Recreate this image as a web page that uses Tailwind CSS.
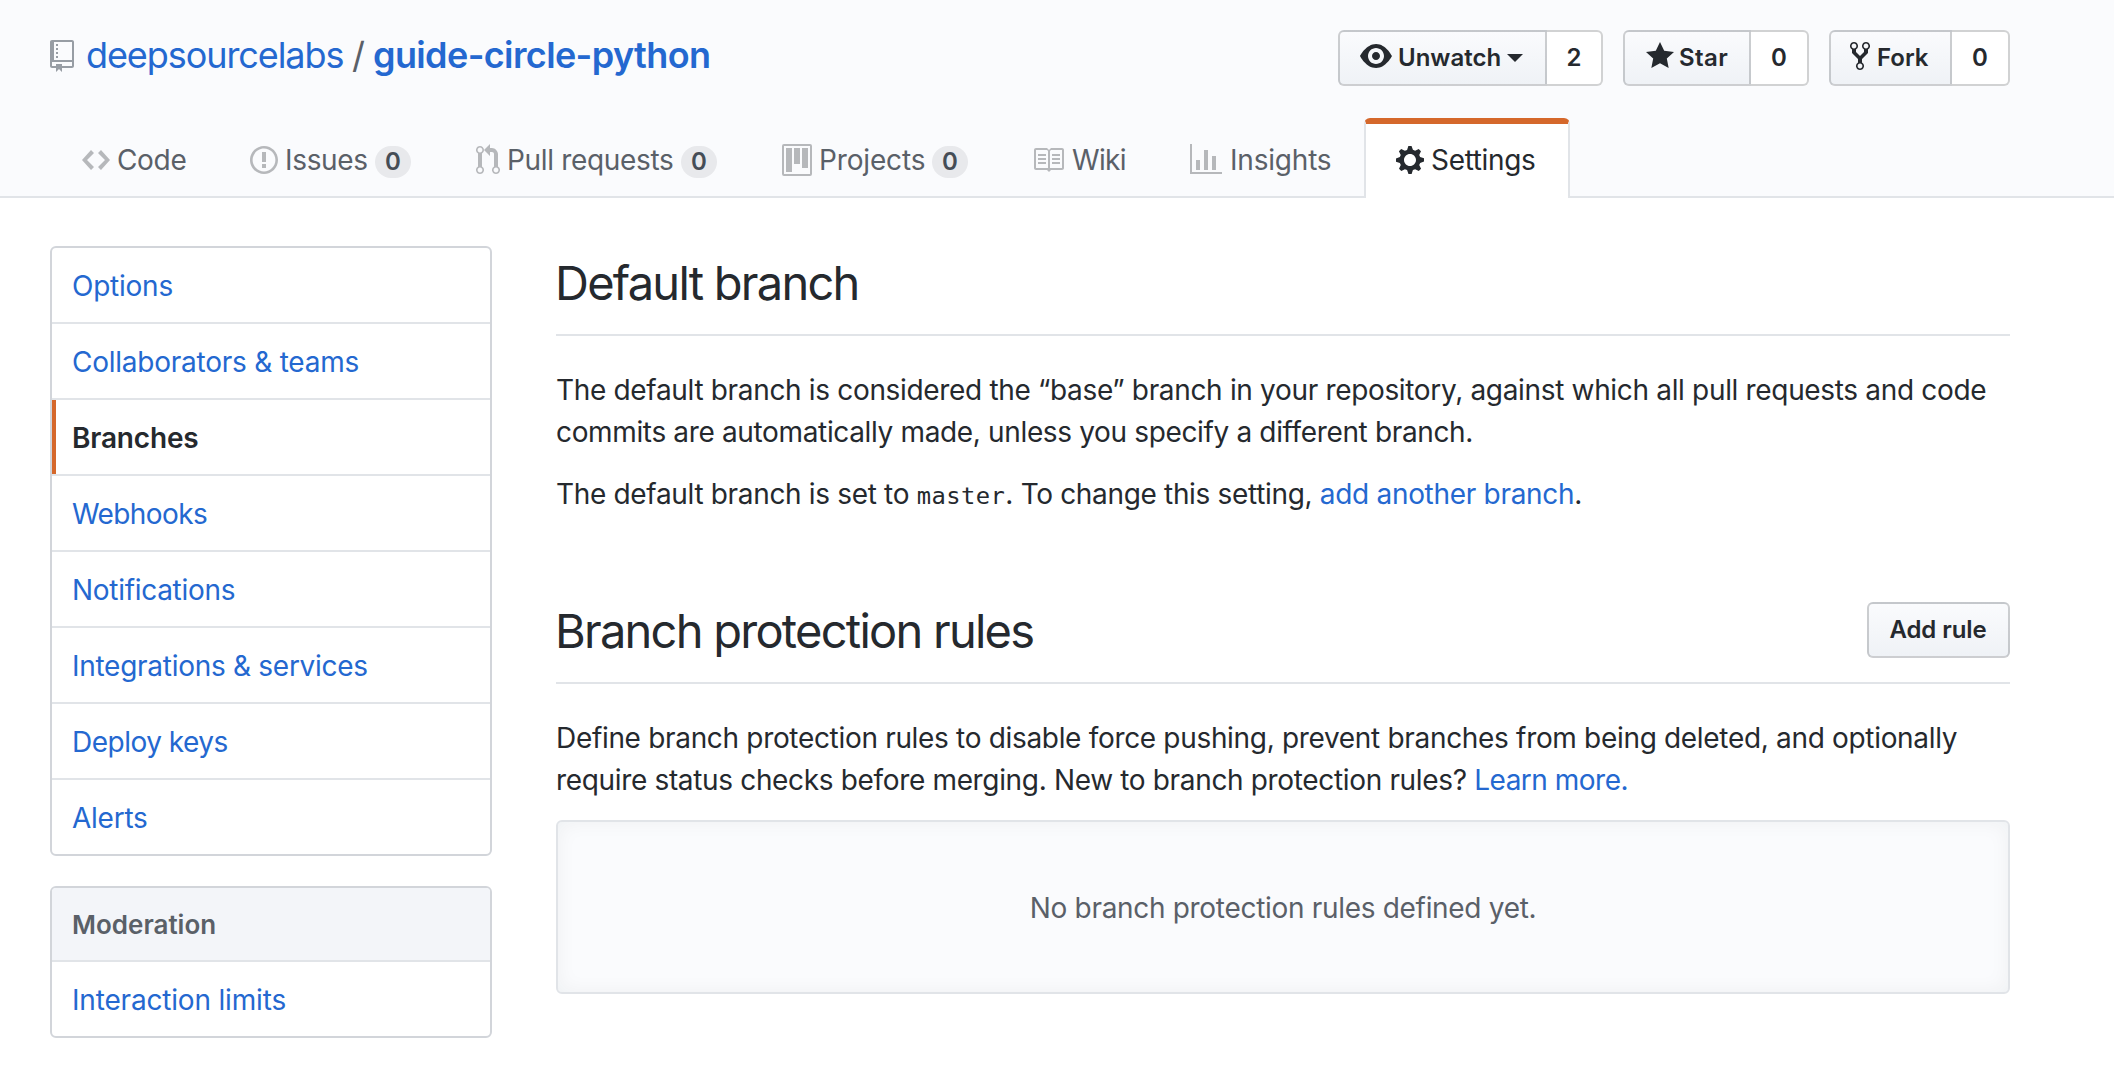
<!DOCTYPE html>
<html lang="en">
<head>
<meta charset="utf-8">
<title>Branches</title>
<script src="https://cdn.jsdelivr.net/npm/@tailwindcss/browser@4"></script>
</head>
<body class="bg-white font-['Inter',sans-serif] text-[28px] leading-[42px] tracking-[-0.33px] text-[#25292e] antialiased">
<header class="h-[198px] border-b-2 border-[#e1e4e8] bg-[#fafbfd] pt-[30px]">
  <div class="flex h-[56px] items-center justify-between pr-[104px] pl-[50px]">
    <h1 class="flex h-[50px] items-center self-start text-[36px] whitespace-nowrap">
      <svg class="mt-[2px] h-8 w-6 fill-[#979da4]" viewBox="0 0 12 16"><path fill-rule="evenodd" d="M4 9H3V8h1v1zm0-3H3v1h1V6zm0-2H3v1h1V4zm0-2H3v1h1V2zm8-1v12c0 .55-.45 1-1 1H6v2l-1.5-1.5L3 16v-2H1c-.55 0-1-.45-1-1V1c0-.55.45-1 1-1h10c.55 0 1 .45 1 1zm-1 10H1v2h2v-1h3v1h5v-2zm0-10H2v9h9V1z"/></svg>
      <a class="ml-3 w-[266px] tracking-[-1.08px] text-[#2468d0]">deepsourcelabs</a>
      <span class="w-[21px] text-[#5a6068]">/</span>
      <a class="font-semibold tracking-[-0.62px] text-[#2468d0]">guide-circle-python</a>
    </h1>
    <div class="flex gap-[20px] text-[24px] font-semibold tracking-normal">
      <div class="flex h-[56px]">
        <div class="flex w-[209px] items-center rounded-l-md border-2 border-[#1b1f23]/20 bg-linear-to-b from-[#fafbfd] to-[#eff2f6] pb-1 pl-5">
          <svg class="h-8 w-8 fill-[#25292e]" viewBox="0 0 16 16"><path fill-rule="evenodd" d="M8.06 2C3 2 0 8 0 8s3 6 8.06 6C13 14 16 8 16 8s-3-6-7.94-6zM8 12c-2.2 0-4-1.78-4-4 0-2.2 1.8-4 4-4 2.22 0 4 1.8 4 4 0 2.22-1.78 4-4 4zm2-4c0 1.11-.89 2-2 2-1.11 0-2-.89-2-2 0-1.11.89-2 2-2 1.11 0 2 .89 2 2z"/></svg>
          <span class="mt-1 ml-[6px]">Unwatch</span>
          <svg class="mt-1 ml-[6px] h-2 w-4 fill-[#25292e]" viewBox="0 0 16 8"><path d="M0 0h16L8 8z"/></svg>
        </div>
        <div class="flex w-[56px] items-center justify-center rounded-r-md border-2 border-l-0 border-[#1b1f23]/20 bg-white">2</div>
      </div>
      <div class="flex h-[56px]">
        <div class="flex w-[128px] items-center rounded-l-md border-2 border-[#1b1f23]/20 bg-linear-to-b from-[#fafbfd] to-[#eff2f6] pb-1 pl-[21px]">
          <svg class="h-8 w-7 fill-[#25292e]" viewBox="0 0 14 16"><path fill-rule="evenodd" d="M14 6l-4.9-.64L7 1 4.9 5.36 0 6l3.6 3.26L2.67 14 7 11.67 11.33 14l-.93-4.74L14 6z"/></svg>
          <span class="mt-1 ml-[5px] tracking-[0.4px]">Star</span>
        </div>
        <div class="flex w-[58px] items-center justify-center rounded-r-md border-2 border-l-0 border-[#1b1f23]/20 bg-white">0</div>
      </div>
      <div class="flex h-[56px]">
        <div class="flex w-[123px] items-center rounded-l-md border-2 border-[#1b1f23]/20 bg-linear-to-b from-[#fafbfd] to-[#eff2f6] pb-1 pl-[19px]">
          <svg class="h-8 w-5 fill-[#25292e]" viewBox="0 0 10 16"><path fill-rule="evenodd" d="M8 1a1.993 1.993 0 0 0-1 3.72V6L5 8 3 6V4.72A1.993 1.993 0 0 0 2 1a1.993 1.993 0 0 0-1 3.72V6.5l3 3v1.78A1.993 1.993 0 0 0 5 15a1.993 1.993 0 0 0 1-3.72V9.5l3-3V4.72A1.993 1.993 0 0 0 8 1zM2 4.2C1.34 4.2.8 3.65.8 3c0-.65.55-1.2 1.2-1.2.65 0 1.2.55 1.2 1.2 0 .65-.55 1.2-1.2 1.2zm3 10c-.66 0-1.2-.55-1.2-1.2 0-.65.55-1.2 1.2-1.2.65 0 1.2.55 1.2 1.2 0 .65-.55 1.2-1.2 1.2zm3-10c-.66 0-1.2-.55-1.2-1.2 0-.65.55-1.2 1.2-1.2.65 0 1.2.55 1.2 1.2 0 .65-.55 1.2-1.2 1.2z"/></svg>
          <span class="mt-1 ml-[7px]">Fork</span>
        </div>
        <div class="flex w-[58px] items-center justify-center rounded-r-md border-2 border-l-0 border-[#1b1f23]/20 bg-white">0</div>
      </div>
    </div>
  </div>
  <nav class="mt-8 flex h-[80px] pl-[50px] whitespace-nowrap text-[#5a6068]">
    <a class="flex w-[168px] items-center pt-1 pr-[33px] pl-8">
      <svg class="h-8 w-7 shrink-0 fill-[#1b1f23]/30" viewBox="0 0 14 16"><path fill-rule="evenodd" d="M9.5 3L8 4.5 11.5 8 8 11.5 9.5 13 14 8 9.5 3zm-5 0L0 8l4.5 5L6 11.5 2.5 8 6 4.5 4.5 3z"/></svg>
      <span class="ml-[7px]">Code</span>
    </a>
    <a class="flex w-[226px] items-center pt-1 pr-[33px] pl-8">
      <svg class="h-8 w-7 shrink-0 fill-[#1b1f23]/30" viewBox="0 0 14 16"><path fill-rule="evenodd" d="M7 2.3c3.14 0 5.7 2.56 5.7 5.7s-2.56 5.7-5.7 5.7A5.71 5.71 0 0 1 1.3 8c0-3.14 2.56-5.7 5.7-5.7zM7 1C3.14 1 0 4.14 0 8s3.14 7 7 7 7-3.14 7-7-3.14-7-7-7zm1 3H6v5h2V4zm0 6H6v2h2v-2z"/></svg>
      <span class="ml-[7px]">Issues</span>
      <span class="mt-1 ml-auto flex h-8 w-9 items-center justify-center rounded-full bg-[#1b1f23]/8 text-[24px] font-semibold tracking-normal text-[#454d56]">0</span>
    </a>
    <a class="flex w-[306px] items-center pt-1 pr-[33px] pl-8">
      <svg class="h-8 w-6 shrink-0 fill-[#1b1f23]/30" viewBox="0 0 12 16"><path fill-rule="evenodd" d="M11 11.28V5c-.03-.78-.34-1.47-.94-2.06C9.46 2.35 8.78 2.03 8 2H7V0L4 3l3 3V4h1c.27.02.48.11.69.31.21.2.3.42.31.69v6.28A1.993 1.993 0 0 0 10 15a1.993 1.993 0 0 0 1-3.72zm-1 2.92c-.66 0-1.2-.55-1.2-1.2 0-.65.55-1.2 1.2-1.2.65 0 1.2.55 1.2 1.2 0 .65-.55 1.2-1.2 1.2zM4 3c0-1.11-.89-2-2-2a1.993 1.993 0 0 0-1 3.72v6.56A1.993 1.993 0 0 0 2 15a1.993 1.993 0 0 0 1-3.72V4.72c.59-.34 1-.98 1-1.72zm-.8 10c0 .66-.55 1.2-1.2 1.2-.65 0-1.2-.55-1.2-1.2 0-.65.55-1.2 1.2-1.2.65 0 1.2.55 1.2 1.2zM2 4.2C1.34 4.2.8 3.65.8 3c0-.65.55-1.2 1.2-1.2.65 0 1.2.55 1.2 1.2 0 .65-.55 1.2-1.2 1.2z"/></svg>
      <span class="ml-[7px]">Pull requests</span>
      <span class="mt-1 ml-auto flex h-8 w-9 items-center justify-center rounded-full bg-[#1b1f23]/8 text-[24px] font-semibold tracking-normal text-[#454d56]">0</span>
    </a>
    <a class="flex w-[250px] items-center pt-1 pr-8 pl-8">
      <svg class="h-8 w-[30px] shrink-0 fill-[#1b1f23]/30" viewBox="0 0 15 16"><path fill-rule="evenodd" d="M10 12h3V2h-3v10zm-4-2h3V2H6v8zm-4 4h3V2H2v12zm-1 1h13V1H1v14zM14 0H1a1 1 0 0 0-1 1v14a1 1 0 0 0 1 1h13a1 1 0 0 0 1-1V1a1 1 0 0 0-1-1z"/></svg>
      <span class="ml-[7px] tracking-[-0.15px]">Projects</span>
      <span class="mt-1 ml-auto flex h-8 w-9 items-center justify-center rounded-full bg-[#1b1f23]/8 text-[24px] font-semibold tracking-normal text-[#454d56]">0</span>
    </a>
    <a class="flex w-[158px] items-center pt-1 pr-8 pl-8">
      <svg class="h-8 w-8 shrink-0 fill-[#1b1f23]/30" viewBox="0 0 16 16"><path fill-rule="evenodd" d="M3 5h4v1H3V5zm0 3h4V7H3v1zm0 2h4V9H3v1zm11-5h-4v1h4V5zm0 2h-4v1h4V7zm0 2h-4v1h4V9zm2-6v9c0 .55-.45 1-1 1H9.5l-1 1-1-1H2c-.55 0-1-.45-1-1V3c0-.55.45-1 1-1h5.5l1 1 1-1H15c.55 0 1 .45 1 1zm-8 .5L7.5 3H2v9h6V3.5zm7-.5H9.5l-.5.5V12h6V3z"/></svg>
      <span class="ml-2 tracking-[-0.7px]">Wiki</span>
    </a>
    <a class="flex w-[206px] items-center pt-1 pr-8 pl-8">
      <svg class="h-8 w-8 shrink-0 fill-[#1b1f23]/30" viewBox="0 0 16 16"><path fill-rule="evenodd" d="M16 14v1H0V0h1v14h15zM5 13H3V8h2v5zm4 0H7V3h2v10zm4 0h-2V6h2v7z"/></svg>
      <span class="ml-2 tracking-[-0.2px]">Insights</span>
    </a>
    <a class="flex w-[206px] items-center rounded-t-md border-2 border-t-6 border-b-0 border-[#e1e4e8] border-t-[#d5682b] bg-white pb-[2px] pl-[30px] text-[#25292e]">
      <svg class="h-8 w-7 shrink-0 fill-[#25292e]" viewBox="0 0 14 16"><path fill-rule="evenodd" d="M14 8.77v-1.6l-1.94-.64-.45-1.09.88-1.84-1.13-1.13-1.81.91-1.09-.45-.69-1.92h-1.6l-.63 1.94-1.11.45-1.84-.88-1.13 1.13.91 1.81-.45 1.09L0 7.23v1.59l1.94.64.45 1.09-.88 1.84 1.13 1.13 1.81-.91 1.09.45.69 1.92h1.59l.63-1.94 1.11-.45 1.84.88 1.13-1.13-.92-1.81.47-1.09L14 8.75v.02zM7 11c-1.66 0-3-1.34-3-3s1.34-3 3-3 3 1.34 3 3-1.34 3-3 3z"/></svg>
      <span class="ml-[7px]">Settings</span>
    </a>
  </nav>
</header>
<div class="flex gap-[64px] pt-12 pr-[104px] pl-[50px]">
  <aside class="w-[442px] shrink-0 tracking-[-0.24px] text-[#2468d0]">
    <nav class="divide-y-2 divide-[#e1e4e8] rounded-md border-2 border-[#d2d5da]">
      <a class="block h-[76px] px-5 pt-[17px]">Options</a>
      <a class="block h-[76px] px-5 pt-[17px]">Collaborators &amp; teams</a>
      <a class="relative block h-[76px] px-5 pt-[17px] font-semibold tracking-[-0.18px] text-[#25292e] before:absolute before:top-0 before:left-0 before:h-full before:w-1 before:bg-[#d5682b]">Branches</a>
      <a class="block h-[76px] px-5 pt-[17px] tracking-[-0.6px]">Webhooks</a>
      <a class="block h-[76px] px-5 pt-[17px] tracking-[-0.3px]">Notifications</a>
      <a class="block h-[76px] px-5 pt-[17px] tracking-[-0.28px]">Integrations &amp; services</a>
      <a class="block h-[76px] px-5 pt-[17px] tracking-[-0.5px]">Deploy keys</a>
      <a class="block h-[74px] px-5 pt-[17px]">Alerts</a>
    </nav>
    <nav class="mt-[30px] rounded-md border-2 border-[#d2d5da]">
      <h3 class="h-[74px] rounded-t-sm border-b-2 border-[#e1e4e8] bg-[#f3f5f9] px-5 pt-4 text-[26px] font-semibold tracking-normal text-[#5a6068]">Moderation</h3>
      <a class="block h-[74px] px-5 pt-[17px] tracking-[-0.18px]">Interaction limits</a>
    </nav>
  </aside>
  <main class="w-[1454px]">
    <div class="h-[90px] border-b-2 border-[#e1e4e8]">
      <h2 class="-ml-px text-[47px] leading-[73px] tracking-[-1.75px]">Default branch</h2>
    </div>
    <p class="mt-[33px] whitespace-nowrap">The default branch is considered the “base” branch in your repository, against which all pull requests and code<br><span class="tracking-[-0.35px]">commits are automatically made, unless you specify a different branch.</span></p>
    <p class="mt-5 whitespace-nowrap">The default branch is set to <code class="font-['DejaVu_Sans_Mono',monospace] text-[23.8px] leading-none tracking-[0.45px]">master</code>. To change this setting, <a class="tracking-[-0.3px] text-[#2468d0]">add another branch</a>.</p>
    <div class="mt-[79px] flex h-[90px] items-start justify-between border-b-2 border-[#e1e4e8]">
      <h2 class="-ml-px text-[47px] leading-[73px] tracking-[-1.75px]">Branch protection rules</h2>
      <button class="mt-2 h-[56px] w-[143px] rounded-md border-2 border-[#1b1f23]/20 bg-linear-to-b from-[#fafbfd] to-[#eff2f6] pr-px text-[24px] leading-none font-semibold tracking-[-0.08px]">Add rule</button>
    </div>
    <p class="mt-[33px] whitespace-nowrap"><span class="tracking-[-0.32px]">Define branch protection rules to disable force pushing, prevent branches from being deleted, and optionally</span><br><span class="tracking-[-0.34px]">require status checks before merging. New to branch protection rules? </span><a class="tracking-[-0.5px] text-[#2468d0]">Learn more.</a></p>
    <div class="mt-[19px] flex h-[174px] items-center justify-center rounded-md border-2 border-[#e1e4e8] bg-[#fafbfd] pt-[2px] tracking-[-0.31px] text-[#5a6068] shadow-[inset_0_0_20px_rgba(27,31,35,0.05)]">No branch protection rules defined yet.</div>
  </main>
</div>
</body>
</html>
